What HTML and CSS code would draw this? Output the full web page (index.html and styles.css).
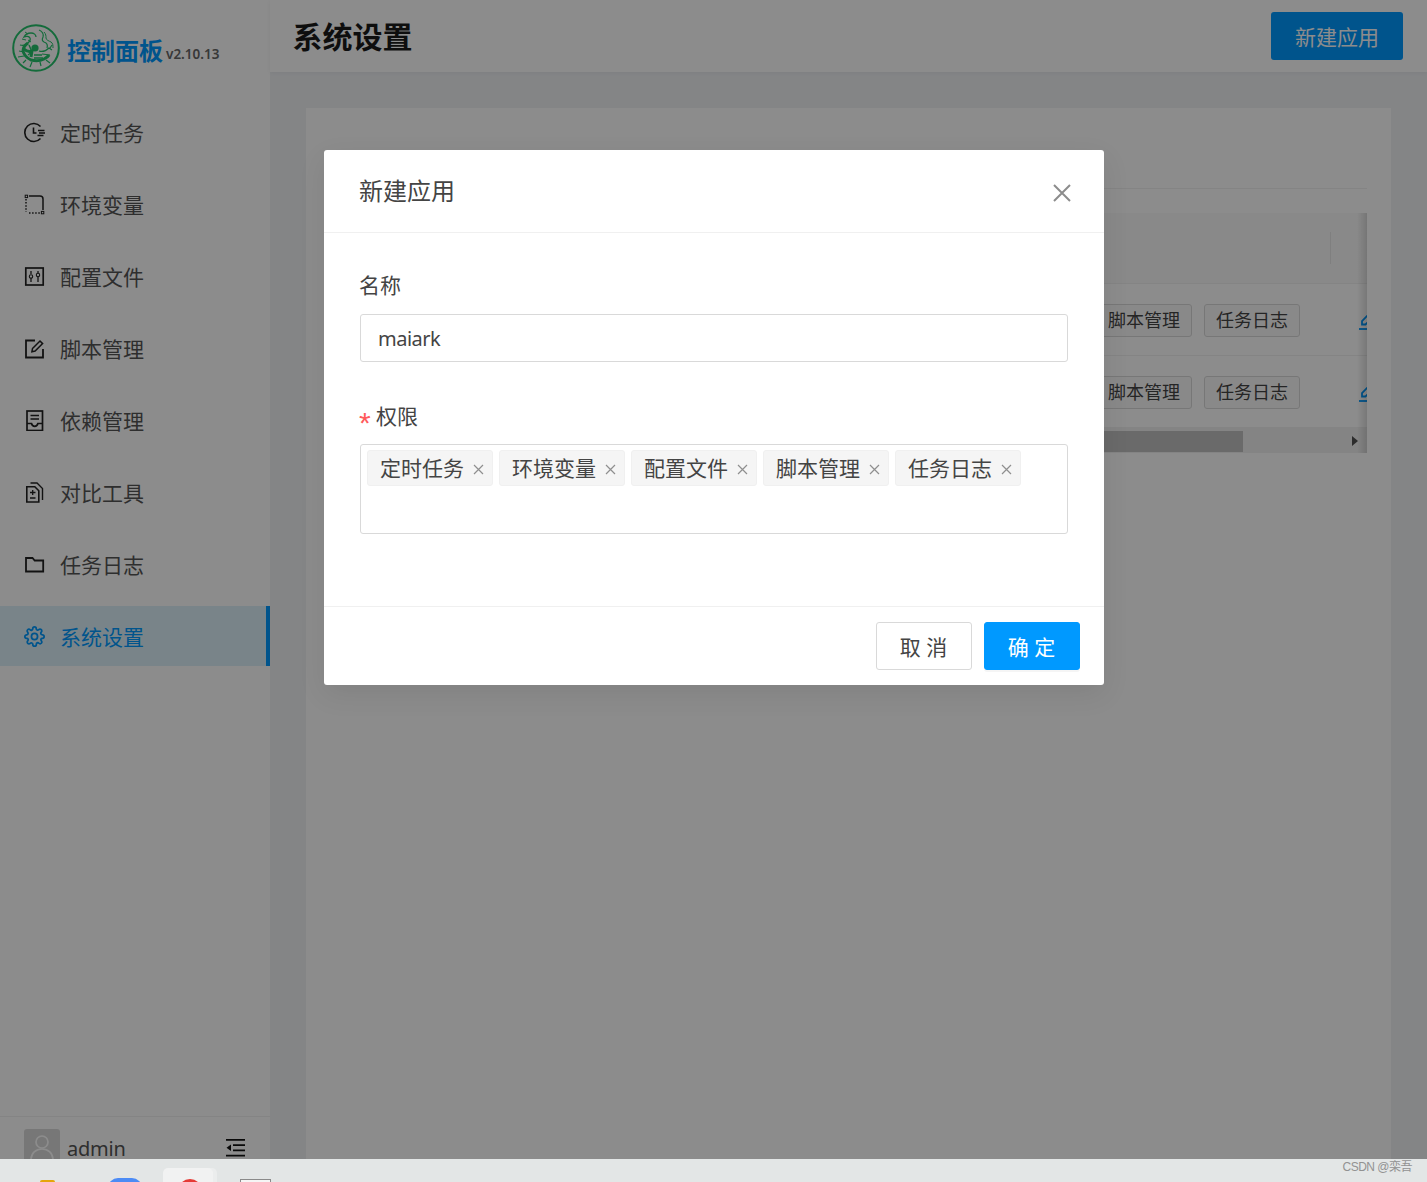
FILE: index.html
```html
<!DOCTYPE html>
<html lang="zh-CN">
<head>
<meta charset="utf-8">
<title>系统设置</title>
<link rel="stylesheet" href="styles.css">
</head>
<body>
<div class="screen">
  <aside class="sidebar">
    <div class="brand">
      <svg class="logo" viewBox="0 0 48 48" fill="none" stroke="#25c46c">
        <circle cx="24" cy="24" r="22.8" stroke-width="2"/>
        <circle cx="23" cy="24" r="3.6" fill="#25c46c" stroke="none"/>
        <path d="M8 21c3 1 6 0 8-2 2-2 3-3 2-5-1-2-4-2-6-1 1-2 3-4 7-4 3 0 5 2 5 4" stroke-width="1.3"/>
        <path d="M13 8l3 2M10 15l4 1M16 16l3 2" stroke-width="1"/>
        <path d="M16 19c-3 2-5 5-5 8 1 4 4 7 8 9 4 1 9 1 13-1 2-1 4-2 5-4" stroke-width="3"/>
        <path d="M12 25c2 2 5 3 8 2l-1 6" stroke-width="3"/>
        <path d="M17 21l3 7-4 3M22 31h8M22 34h9" stroke-width="1.400"/>
        <path d="M27 6c3 1 5 4 4 7-1 2-1 4 1 5 3 1 4 3 3 6" stroke-width="1.200"/>
        <path d="M32 8c2 2 2 4 2 6s3 3 5 4 2 4 2 6" stroke-width="1"/>
        <path d="M27 27c3 1 7 0 10-3l3 2M30 30l8 1M38 24l2-3M14 36l-3 3M20 38l-2 5M28 38l1 4M34 36l4 3M7 27l5 1M6 33l6-1" stroke-width="1.200"/>
      </svg>
      <span class="brand-name">控制面板</span>
      <span class="brand-version">v2.10.13</span>
    </div>
    <nav class="nav">
      <a class="nav-item">
        <svg class="nav-icon" viewBox="0 0 21 21" fill="none" stroke="currentColor" stroke-width="1.6"><path d="M16.500 4.500A9 9 0 1 0 16.500 16.500"/><path d="M9.500 5.500V11h3M14 8.500h6.500M15 11h6M13.500 13.500h6"/></svg>
        <span>定时任务</span>
      </a>
      <a class="nav-item">
        <svg class="nav-icon" viewBox="0 0 21 21" fill="none" stroke="currentColor" stroke-width="1.5"><path d="M5 2h11a3 3 0 0 1 3 3v11"/><path d="M2 5v13M5 19h12" stroke-dasharray="1.500 1.600"/><rect x="1.200" y="1.200" width="2.400" height="2.400" stroke-width="1"/><rect x="17.400" y="17.400" width="2.400" height="2.400" stroke-width="1"/></svg>
        <span>环境变量</span>
      </a>
      <a class="nav-item">
        <svg class="nav-icon" viewBox="0 0 21 21" fill="none" stroke="currentColor" stroke-width="1.700"><rect x="1.800" y="2" width="17.400" height="17"/><path d="M7 5v3M7 12v4M14 5v2M14 11v5" stroke-width="1.300"/><circle cx="7" cy="10.500" r="1.700" stroke-width="1.100"/><circle cx="14" cy="9" r="1.700" stroke-width="1.100"/></svg>
        <span>配置文件</span>
      </a>
      <a class="nav-item">
        <svg class="nav-icon" viewBox="0 0 21 21" fill="none" stroke="currentColor" stroke-width="1.800"><path d="M11 2.500H2v17h17V11"/><path d="M8.500 10.500 16 3l2.600 2.600-7.500 7.500-3.200.6z" stroke-width="1.500"/></svg>
        <span>脚本管理</span>
      </a>
      <a class="nav-item">
        <svg class="nav-icon" viewBox="0 0 21 21" fill="none" stroke="currentColor" stroke-width="1.700"><rect x="3" y="1" width="15.500" height="19.500"/><path d="M6.500 5.500h8.500M6.500 9h8.500" stroke-width="1.400"/><path d="M3 13.500h4.500c.5 2 1.500 2.800 3.200 2.800s2.700-.8 3.200-2.800h4.600"/></svg>
        <span>依赖管理</span>
      </a>
      <a class="nav-item">
        <svg class="nav-icon" viewBox="0 0 21 21" fill="none" stroke="currentColor" stroke-width="1.600"><path d="M2.800 4.800h8l4 4V20H2.800z"/><path d="M6.500 1h6.500l5.500 5.500V18" stroke-width="1.400"/><path d="M6 10.500h5.500M8.700 8v5M6 16h5.500" stroke-width="1.300"/></svg>
        <span>对比工具</span>
      </a>
      <a class="nav-item">
        <svg class="nav-icon" viewBox="0 0 21 21" fill="none" stroke="currentColor" stroke-width="1.800"><path d="M2 4h6.500l2.200 2.500H19.200V17.500H2z"/></svg>
        <span>任务日志</span>
      </a>
      <a class="nav-item active">
        <svg class="nav-icon" viewBox="0 0 24 24" fill="none" stroke="currentColor" stroke-width="2"><circle cx="12" cy="12" r="3.500"/><path d="M19.400 15a1.650 1.650 0 0 0 .33 1.820l.06.06a2 2 0 0 1 0 2.830 2 2 0 0 1-2.830 0l-.06-.06a1.650 1.650 0 0 0-1.820-.33 1.650 1.650 0 0 0-1 1.510V21a2 2 0 0 1-2 2 2 2 0 0 1-2-2v-.09A1.650 1.650 0 0 0 9 19.400a1.650 1.650 0 0 0-1.820.33l-.06.06a2 2 0 0 1-2.830 0 2 2 0 0 1 0-2.830l.06-.06a1.650 1.650 0 0 0 .33-1.820 1.650 1.650 0 0 0-1.510-1H3a2 2 0 0 1-2-2 2 2 0 0 1 2-2h.09A1.650 1.650 0 0 0 4.600 9a1.650 1.650 0 0 0-.33-1.820l-.06-.06a2 2 0 0 1 0-2.830 2 2 0 0 1 2.830 0l.06.06a1.650 1.650 0 0 0 1.820.33H9a1.650 1.650 0 0 0 1-1.510V3a2 2 0 0 1 2-2 2 2 0 0 1 2 2v.09a1.650 1.650 0 0 0 1 1.510 1.650 1.650 0 0 0 1.820-.33l.06-.06a2 2 0 0 1 2.830 0 2 2 0 0 1 0 2.830l-.06.06a1.650 1.650 0 0 0-.33 1.820V9a1.650 1.650 0 0 0 1.510 1H21a2 2 0 0 1 2 2 2 2 0 0 1-2 2h-.09a1.650 1.650 0 0 0-1.510 1z"/></svg>
        <span>系统设置</span>
      </a>
    </nav>
    <div class="side-footer">
      <div class="avatar">
        <svg viewBox="0 0 36 36" fill="none" stroke="#fff" stroke-width="1.700"><circle cx="18" cy="13" r="6"/><path d="M7 31c0-7 5-11 11-11s11 4 11 11"/></svg>
      </div>
      <span class="user-name">admin</span>
      <svg class="fold" viewBox="0 0 20 18" fill="currentColor"><path d="M0 0h19v1.700H0zM7 5.300h12V7H7zM7 10.500h12v1.700H7zM0 15.800h19v1.700H0zM5 5.500v6.500L0.500 8.700z"/></svg>
    </div>
  </aside>

  <main class="content">
    <header class="topbar">
      <h1 class="page-title">系统设置</h1>
      <button class="primary-btn">新建应用</button>
    </header>
    <div class="page-body">
      <section class="card">
        <div class="tabs"></div>
        <div class="table">
          <div class="table-head"><i class="head-divider"></i></div>
          <div class="table-row">
            <span class="tag">定时任务</span><span class="tag">环境变量</span><span class="tag">配置文件</span><span class="tag">脚本管理</span><span class="tag">任务日志</span>
            <span class="row-action"><svg class="edit" viewBox="0 0 21 21" fill="none" stroke="currentColor" stroke-width="1.800"><path d="M1 20h19"/><path d="M4 15.500V12L13 3l3.500 3.500-9 9z"/></svg></span>
          </div>
          <div class="table-row">
            <span class="tag">定时任务</span><span class="tag">环境变量</span><span class="tag">配置文件</span><span class="tag">脚本管理</span><span class="tag">任务日志</span>
            <span class="row-action"><svg class="edit" viewBox="0 0 21 21" fill="none" stroke="currentColor" stroke-width="1.800"><path d="M1 20h19"/><path d="M4 15.500V12L13 3l3.500 3.500-9 9z"/></svg></span>
          </div>
          <div class="scrollbar"><i class="thumb"></i><i class="arrow"></i></div>
        </div>
      </section>
    </div>
  </main>

  <div class="mask">
    <div class="dialog">
      <div class="dialog-head">
        <span class="dialog-title">新建应用</span>
        <svg class="dialog-close" viewBox="0 0 20 20" fill="none" stroke="currentColor" stroke-width="2"><path d="M2 2l16 16M18 2L2 18"/></svg>
      </div>
      <div class="dialog-body">
        <div class="field-label">名称</div>
        <div class="text-input">maiark</div>
        <div class="field-label second"><span class="req">*</span>权限</div>
        <div class="multi-select">
          <span class="chip">定时任务<svg class="chip-x" viewBox="0 0 11 11" fill="none" stroke="currentColor" stroke-width="1.200"><path d="M1 1l9 9M10 1l-9 9"/></svg></span>
          <span class="chip">环境变量<svg class="chip-x" viewBox="0 0 11 11" fill="none" stroke="currentColor" stroke-width="1.200"><path d="M1 1l9 9M10 1l-9 9"/></svg></span>
          <span class="chip">配置文件<svg class="chip-x" viewBox="0 0 11 11" fill="none" stroke="currentColor" stroke-width="1.200"><path d="M1 1l9 9M10 1l-9 9"/></svg></span>
          <span class="chip">脚本管理<svg class="chip-x" viewBox="0 0 11 11" fill="none" stroke="currentColor" stroke-width="1.200"><path d="M1 1l9 9M10 1l-9 9"/></svg></span>
          <span class="chip">任务日志<svg class="chip-x" viewBox="0 0 11 11" fill="none" stroke="currentColor" stroke-width="1.200"><path d="M1 1l9 9M10 1l-9 9"/></svg></span>
        </div>
      </div>
      <div class="dialog-foot">
        <button class="btn">取 消</button>
        <button class="btn confirm">确 定</button>
      </div>
    </div>
  </div>
</div>
<footer class="taskbar">
  <i class="tb tb-yellow"></i>
  <i class="tb tb-blue"></i>
  <span class="tb-tab"><i class="tb-red"></i></span>
  <i class="tb tb-box"></i>
  <span class="watermark">CSDN @栾吾</span>
</footer>
</body>
</html>
```

FILE: styles.css
```css
* { box-sizing: border-box; }
html, body { margin: 0; padding: 0; }
body {
  width: 1427px;
  height: 1182px;
  overflow: hidden;
  background: #fff;
  color: #444;
  font-family: "Noto Sans", "Noto Sans CJK SC", sans-serif;
  font-size: 21px;
}
.screen {
  position: relative;
  display: flex;
  height: 1159px;
  overflow: hidden;
}

/* sidebar */
.sidebar {
  width: 270px;
  flex: none;
  display: flex;
  flex-direction: column;
  background: #fff;
}
.brand {
  height: 102px;
  padding: 24px 0 0 12px;
  display: flex;
  align-items: flex-start;
}
.logo { width: 48px; height: 48px; flex: none; }
.brand-name {
  margin: 9px 0 0 7px;
  font-size: 24px;
  line-height: 36px;
  font-weight: 700;
  color: #0099ff;
}
.brand-version {
  margin: 20px 0 0 3px;
  font-size: 13.500px;
  line-height: 20px;
  font-weight: 600;
  color: #666;
}
.nav { display: flex; flex-direction: column; gap: 12px; flex: 1; }
.nav-item {
  height: 60px;
  padding-left: 24px;
  display: flex;
  align-items: center;
  gap: 15px;
  color: #555;
}
.nav-icon { width: 21px; height: 21px; flex: none; color: #222; }
.nav-item.active {
  background: #dcf1f9;
  color: #0099ff;
  border-right: 4px solid #0099ff;
}
.nav-item.active .nav-icon { color: #0099ff; }
.side-footer {
  height: 60px;
  margin-bottom: -17px;
  flex: none;
  padding: 12px 24px 0;
  border-top: 1px solid #f0f0f0;
  display: flex;
  align-items: flex-start;
  gap: 7px;
}
.avatar {
  width: 36px;
  height: 36px;
  background: #d9d9d9;
  border-radius: 3px;
  flex: none;
}
.avatar svg { width: 36px; height: 36px; display: block; }
.user-name { line-height: 20px; margin-top: 10px; color: #555; font-size: 20px; letter-spacing: -.2px; }
.fold { width: 20px; height: 18px; margin: 10px 0 0 auto; color: #111; flex: none; }

/* main */
.content { flex: 1; display: flex; flex-direction: column; background: #f0f2f5; min-width: 0; }
.topbar {
  height: 72px;
  flex: none;
  background: #fff;
  display: flex;
  align-items: center;
  justify-content: space-between;
  padding: 0 24px 0 22.500px;
  box-shadow: 0 1px 4px rgba(0,0,0,.05);
}
.page-title { margin: 2px 0 0; font-size: 30px; line-height: 40px; font-weight: 700; color: #1a1a1a; }
.primary-btn {
  width: 132px;
  height: 48px;
  border: 0;
  border-radius: 3px;
  background: #0099ff;
  color: #fff;
  font: inherit;
}
.page-body { flex: 1; padding: 36px 36px 0; }
.card { height: 100%; background: #fff; padding: 0 24px; }
.tabs { height: 81px; border-bottom: 1px solid #f0f0f0; margin-bottom: 24px; }
.table { position: relative; height: 240px; overflow: hidden; }
.table::after {
  content: "";
  position: absolute;
  top: 0; right: 0; bottom: 0;
  width: 10px;
  background: linear-gradient(to right, rgba(0,0,0,0), rgba(0,0,0,.14));
}
.table-head { height: 71px; background: #fafafa; border-bottom: 1px solid #f0f0f0; position: relative; }
.head-divider {
  position: absolute;
  right: 36px;
  top: 19px;
  width: 1px;
  height: 32px;
  background: #e8e8e8;
}
.table-row {
  height: 72px;
  border-bottom: 1px solid #f0f0f0;
  display: flex;
  align-items: center;
  justify-content: flex-end;
  gap: 12px;
  padding-top: 2px;
}
.tag {
  height: 33px;
  padding: 0 11px;
  border: 1px solid #d9d9d9;
  border-radius: 3px;
  background: #fafafa;
  font-size: 18px;
  line-height: 31px;
  color: #444;
}
.row-action { width: 55px; flex: none; margin-left: 46px; overflow: hidden; height: 24px; margin-right: -46px; }
.edit { width: 21px; height: 21px; color: #0099ff; display: block; }
.scrollbar { height: 26px; background: #f1f1f1; position: relative; }
.thumb { position: absolute; left: 0; top: 3px; bottom: 2px; width: 913px; background: #c1c1c1; }
.arrow {
  position: absolute;
  right: 9px;
  top: 8px;
  border-left: 6px solid #505050;
  border-top: 5.500px solid transparent;
  border-bottom: 5.500px solid transparent;
}

/* dialog */
.mask {
  position: absolute;
  inset: 0;
  background: rgba(0,0,0,.45);
  padding: 150px 0 0 324px;
}
.dialog {
  width: 780px;
  height: 535px;
  background: #fff;
  border-radius: 3px;
  display: flex;
  flex-direction: column;
  box-shadow: 0 9px 28px rgba(0,0,0,.08);
}
.dialog-head {
  height: 83px;
  flex: none;
  padding: 0 32px 0 35px;
  border-bottom: 1px solid #f0f0f0;
  display: flex;
  align-items: center;
  justify-content: space-between;
}
.dialog-title { font-size: 24px; line-height: 30px; margin-bottom: 1px; }
.dialog-close { width: 20px; height: 20px; color: #8c8c8c; margin-top: 4px; }
.dialog-body { flex: 1; padding: 37px 36px 0; }
.field-label { height: 32px; line-height: 31px; margin: 0 0 12px -1px; }
.field-label.second { line-height: 30px; margin: 39px 0 11px -1px; }
.req {
  display: inline-block;
  width: 17px;
  color: #ff5a5c;
  font-family: "Liberation Sans", sans-serif;
  font-size: 30px;
  line-height: 0;
  vertical-align: -9px;
}
.text-input {
  height: 48px;
  padding: 0 17px;
  border: 1px solid #d9d9d9;
  border-radius: 3px;
  line-height: 48px;
  font-size: 20px;
  letter-spacing: -.5px;
}
.multi-select {
  height: 90px;
  padding: 5px 6px;
  border: 1px solid #d9d9d9;
  border-radius: 3px;
  display: flex;
  align-items: flex-start;
  gap: 6px;
}
.chip {
  width: 126px;
  height: 36px;
  padding: 0 8px 0 12px;
  background: #f5f5f5;
  border: 1px solid #f0f0f0;
  border-radius: 3px;
  line-height: 34px;
  display: flex;
  align-items: center;
  justify-content: space-between;
}
.chip-x { width: 11px; height: 11px; color: #8f8f8f; flex: none; margin-top: 2px; }
.dialog-foot {
  height: 79px;
  flex: none;
  padding: 15px 24px;
  border-top: 1px solid #f0f0f0;
  display: flex;
  justify-content: flex-end;
  gap: 12px;
}
.btn {
  width: 96px;
  height: 48px;
  padding: 0 1px 0 0;
  border: 1px solid #d9d9d9;
  border-radius: 3px;
  background: #fff;
  color: #444;
  font: inherit;
}
.btn.confirm { background: #0099ff; border-color: #0099ff; color: #fff; box-shadow: 0 2px 0 rgba(0,0,0,.04); }

/* taskbar */
.taskbar {
  height: 23px;
  position: relative;
  overflow: hidden;
  background: #e3e6e6;
  display: flex;
  align-items: flex-start;
}
.tb { display: block; flex: none; }
.tb-yellow { width: 15px; height: 10px; margin: 21px 0 0 40px; background: #e5a50a; border-radius: 2px; }
.tb-blue { width: 34px; height: 20px; margin: 19px 0 0 53px; background: #4c8bf5; border-radius: 10px 10px 0 0; }
.tb-tab {
  width: 50px;
  height: 30px;
  margin: 9px 0 0 21px;
  padding-left: 4px;
  background: #f1f2f2;
  border-radius: 5px 5px 0 0;
  box-shadow: 4px 0 0 #ebeded;
  display: flex;
  justify-content: center;
  flex: none;
}
.tb-red { width: 24px; height: 24px; margin-top: 11px; border-radius: 50%; background: #e53935; }
.tb-box { width: 31px; height: 20px; margin: 20px 0 0 27px; background: #f5f5f5; border: 1px solid #8a8a8a; }
.watermark { margin: 1px 15px 0 auto; font-family: "Liberation Sans", "Noto Sans CJK SC", sans-serif; font-size: 12px; line-height: 14px; letter-spacing: -.5px; color: #929292; }
```
